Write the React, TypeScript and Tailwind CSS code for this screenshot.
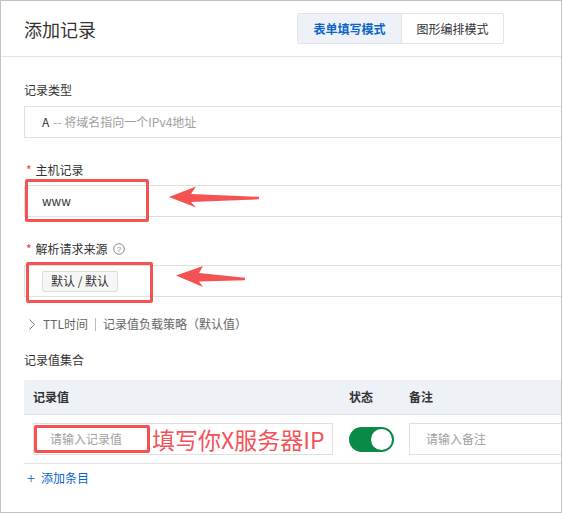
import React from "react";

const Label = ({ text, required, help }: { text: string; required?: boolean; help?: boolean }) => (
  <div className="flex items-center h-[20px] text-[12px] leading-[20px] text-[#333]">
    {required && <span className="text-[#f04134] mr-[4px] ml-[2px] text-[12px] leading-[14px] self-start mt-[3px]">*</span>}
    <span>{text}</span>
    {help && (
      <svg className="ml-[5px]" width="12" height="12" viewBox="0 0 12 12">
        <circle cx="6" cy="6" r="5.3" fill="none" stroke="#8a8a8a" strokeWidth="1" />
        <text x="6" y="8.8" textAnchor="middle" fontSize="8" fill="#8a8a8a" fontFamily="Liberation Sans, sans-serif">?</text>
      </svg>
    )}
  </div>
);

export default function App() {
  return (
    <div className="relative w-[562px] h-[513px] border border-[#c2c2c2] bg-white overflow-hidden font-['Noto_Sans_CJK_SC',sans-serif]">
      {/* header */}
      <div className="h-[56px] border-b border-[#e3e3e3] flex items-center pl-[23px] pr-[57px]">
        <div className="text-[18px] leading-[24px] text-[#333]">添加记录</div>
        <div className="ml-auto flex h-[31px] border border-[#e1e4ea] rounded-[2px] text-[12px]">
          <div className="w-[103px] flex items-center justify-center bg-[#eef2f8] text-[#0a66c8] font-bold">表单填写模式</div>
          <div className="w-[102px] flex items-center justify-center border-l border-[#e1e4ea] text-[#333]">图形编排模式</div>
        </div>
      </div>

      <div className="pl-[23px]">
        <div className="mt-[23px]">
          <Label text="记录类型" />
        </div>
        <div className="mt-[6px] w-[620px] h-[32px] border border-[#e0e0e0] flex items-center pl-[17px] text-[12px]">
          <span className="text-[#333]">A</span>
          <span className="text-[#a0a0a0] ml-[4px]">-- 将域名指向一个IPv4地址</span>
        </div>

        <div className="mt-[22px]">
          <Label text="主机记录" required />
        </div>
        <div className="mt-[5px] w-[620px] h-[32px] border border-[#e0e0e0] flex items-center pl-[17px] text-[12px] text-[#333]">
          www
        </div>

        <div className="mt-[22px]">
          <Label text="解析请求来源" required help />
        </div>
        <div className="mt-[6px] w-[620px] h-[32px] border border-[#e0e0e0] flex items-center pl-[17px]">
          <div className="h-[21px] px-[8px] flex items-center border border-[#dcdcdc] bg-[#f7f7f7] rounded-[2px] text-[12px] text-[#333]">
            默认 / 默认
          </div>
        </div>

        <div className="mt-[17px] h-[20px] flex items-center text-[12px] text-[#666]">
          <svg className="ml-[5px] mr-[8px]" width="6" height="11" viewBox="0 0 6 11">
            <polyline points="0.5,0.5 5.5,5.5 0.5,10.5" fill="none" stroke="#777" strokeWidth="1" />
          </svg>
          <span>TTL时间</span>
          <span className="mx-[7px] h-[13px] border-l border-[#bbb]" />
          <span>记录值负载策略（默认值）</span>
        </div>

        <div className="mt-[16px] h-[20px] text-[12px] leading-[20px] text-[#333]">记录值集合</div>

        <div className="mt-[10px] w-[620px]">
          <div className="h-[35px] bg-[#eef1f6] border-b border-[#dde1e7] grid grid-cols-[316px_60px_1fr] items-center text-[12px] font-bold text-[#333]">
            <div className="pl-[9px]">记录值</div>
            <div className="pl-[9px]">状态</div>
            <div className="pl-[9px]">备注</div>
          </div>
          <div className="h-[49px] border-b border-[#e3e3e3] grid grid-cols-[316px_60px_1fr] items-center">
            <div className="pl-[9px]">
              <div className="relative w-[300px] h-[32px] border border-[#e0e0e0] flex items-center pl-[16px] text-[12px] text-[#a0a0a0]">
                请输入记录值
                <span className="absolute left-[118px] top-[0px] h-[30px] flex items-center text-[23px] text-[#f5525a] leading-[30px]">填写你X服务器IP</span>
              </div>
            </div>
            <div className="pl-[9px]">
              <div className="w-[45px] h-[25px] rounded-full bg-[#0a8a47] flex items-center justify-end pr-[2px]">
                <div className="w-[21px] h-[21px] rounded-full bg-white" />
              </div>
            </div>
            <div className="pl-[9px]">
              <div className="w-[300px] h-[32px] border border-[#e0e0e0] flex items-center pl-[16px] text-[12px] text-[#a0a0a0]">
                请输入备注
              </div>
            </div>
          </div>
        </div>

        <div className="mt-[4px] h-[20px] flex items-center text-[12px] text-[#0a66c8]">
          <span className="ml-[3px] mr-[6px] text-[15px] leading-[20px] font-light">+</span>
          <span>添加条目</span>
        </div>
      </div>

      {/* annotations */}
      <div className="absolute left-[24px] top-[178px] w-[124px] h-[43px] border-[3px] border-[#f55353] rounded-[2px] pointer-events-none" />
      <div className="absolute left-[25px] top-[261px] w-[127px] h-[41px] border-[3px] border-[#f55353] rounded-[2px] pointer-events-none" />
      <div className="absolute left-[33px] top-[424px] w-[116px] h-[28px] border-[3px] border-[#f55353] rounded-[2px] pointer-events-none" />
      <svg className="absolute left-0 top-0 pointer-events-none" width="560" height="511" viewBox="1 1 560 511">
        <polygon
          points="169,197 196,186.5 191,194 259,196.8 259,199.3 191,202 196,207.5"
          fill="#f55353"
        />
        <polygon
          points="176,275.5 203,266 199,273 245,277.8 245,280.3 199,281.5 203,287"
          fill="#f55353"
        />
      </svg>
    </div>
  );
}
